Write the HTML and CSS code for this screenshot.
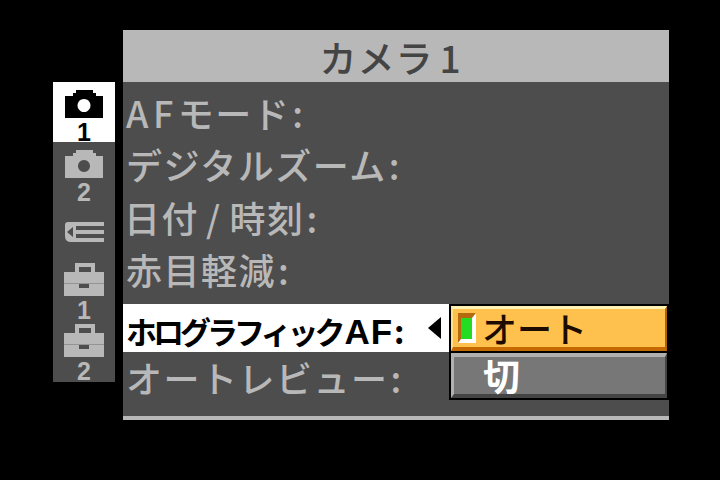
FILE: index.html
```html
<!DOCTYPE html>
<html lang="ja">
<head>
<meta charset="utf-8">
<title>カメラ1</title>
<link rel="stylesheet" href="styles.css">
</head>
<body>
<main class="screen">
  <nav class="tabs">
    <div class="tab tab-active tab-cam1">
      <svg class="icon icon-cam" viewBox="0 0 38 28"><path class="fill" fill-rule="evenodd" d="M0 6H8V3H11V0H28V3H31V6H38V28H0ZM19 9A6.500 6.500 0 1 0 19.010 9Z"/></svg>
      <span class="tab-num">1</span>
    </div>
    <div class="tab tab-cam2">
      <svg class="icon icon-cam" viewBox="0 0 38 28"><path class="fill" fill-rule="evenodd" d="M0 6H8V3H11V0H28V3H31V6H38V28H0ZM19 10A6 6 0 1 0 19.010 10Z"/></svg>
      <span class="tab-num">2</span>
    </div>
    <div class="tab tab-play">
      <svg class="icon icon-play" viewBox="0 0 39 20"><path class="fill" fill-rule="evenodd" d="M3 0H39V4H11V8H39V12H11V16H39V20H6Q0 20 0 14V3Q0 0 3 0ZM8 5L2 10L8 15Z"/></svg>
    </div>
    <div class="tab tab-case1">
      <svg class="icon icon-case" viewBox="0 0 40 33"><path class="fill" fill-rule="evenodd" d="M11 0H31V9H40V33H0V9H11ZM15 4V9H27V4ZM15 21V25H25V21Z"/><rect class="seam" x="0" y="20" width="40" height="1"/></svg>
      <span class="tab-num">1</span>
    </div>
    <div class="tab tab-case2">
      <svg class="icon icon-case" viewBox="0 0 40 33"><path class="fill" fill-rule="evenodd" d="M11 0H31V9H40V33H0V9H11ZM15 4V9H27V4ZM15 21V25H25V21Z"/><rect class="seam" x="0" y="20" width="40" height="1"/></svg>
      <span class="tab-num">2</span>
    </div>
  </nav>
  <section class="panel">
    <h1 class="title">カメラ<span class="title-num">1</span></h1>
    <ul class="rows">
      <li class="row"><span class="af">AF</span>モード<span class="colon">:</span></li>
      <li class="row">デジタルズーム<span class="colon">:</span></li>
      <li class="row row-date">日付<span class="slash">/</span>時刻<span class="colon">:</span></li>
      <li class="row">赤目軽減<span class="colon">:</span></li>
      <li class="row row-active"><span class="kana">ホログラフィック</span><span class="latin">AF</span><span class="colon">:</span><span class="arrow"></span></li>
      <li class="row">オートレビュー<span class="colon">:</span></li>
    </ul>
    <div class="strip"></div>
    <div class="popup">
      <div class="opt opt-on"><span class="marker"></span>オート</div>
      <div class="opt opt-off">切</div>
    </div>
  </section>
</main>
</body>
</html>
```

FILE: styles.css
```css
html, body {
  margin: 0;
  padding: 0;
  background: #000;
}
.screen {
  width: 720px;
  height: 480px;
  box-sizing: border-box;
  padding: 30px 51px 60px 53px;
  display: flex;
  align-items: flex-start;
  gap: 8px;
  background: #000;
  font-family: "Noto Sans CJK JP", "Liberation Sans", sans-serif;
  overflow: hidden;
}
.tabs {
  width: 62px;
  height: 300px;
  margin-top: 52px;
  flex: none;
  background: #4d4d4d;
  color: #b8b8b8;
}
.tab {
  display: flex;
  flex-direction: column;
  align-items: center;
  box-sizing: border-box;
}
.tab-active {
  background: #fff;
  color: #000;
}
.tab-cam1 { height: 60px; padding-top: 8px; }
.tab-cam2 { height: 62px; padding-top: 8px; }
.tab-play { height: 48px; padding-top: 18px; }
.tab-case1 { height: 68px; padding-top: 11px; }
.tab-case2 { height: 62px; padding-top: 4px; }
.icon { display: block; flex: none; }
.icon-cam { width: 38px; height: 28px; }
.icon-play { width: 39px; height: 20px; }
.icon-case { width: 40px; height: 33px; }
.fill { fill: currentColor; }
.seam { fill: #4d4d4d; opacity: 0.35; }
.tab-num {
  font: bold 25px/24px "Liberation Sans", sans-serif;
  height: 24px;
  margin-top: 2px;
}
.panel {
  position: relative;
  width: 546px;
  height: 390px;
  flex: none;
  background: #4d4d4d;
  display: flex;
  flex-direction: column;
}
.title {
  margin: 0;
  height: 52px;
  flex: none;
  box-sizing: border-box;
  padding-right: 11px;
  background: #b8b8b8;
  color: #444;
  font-size: 37px;
  font-weight: 500;
  line-height: 54px;
  text-align: center;
  letter-spacing: 1px;
}
.title-num { margin-left: 6px; }
.rows {
  list-style: none;
  margin: 0;
  padding: 8px 0 0;
  flex: 1;
}
.row {
  height: 52.4px;
  width: 326px;
  box-sizing: border-box;
  padding-left: 3px;
  color: #b8b8b8;
  font-size: 36px;
  font-weight: 500;
  line-height: 44px;
  letter-spacing: 1.5px;
  white-space: nowrap;
  position: relative;
}
.af { letter-spacing: 4.500px; }
.row-date { padding-left: 1px; }
.slash { margin: 0 8px 0 7px; }
.colon { margin-left: 2px; }
.row-active {
  background: #fff;
  color: #000;
  height: 48px;
  margin: 4.400px 0 3px;
  line-height: 48px;
  letter-spacing: 0;
}
.kana {
  font-size: 31px;
  font-weight: 700;
  letter-spacing: -4px;
}
.latin {
  font-family: "Liberation Sans", sans-serif;
  font-size: 35px;
  font-weight: 700;
  letter-spacing: 1px;
  margin-left: 3px;
}
.row-active .colon { font-size: 32px; font-weight: 700; margin-left: 1px; }
.arrow {
  position: absolute;
  right: 8px;
  top: 13px;
  width: 0;
  height: 0;
  border-style: solid;
  border-width: 11px 13px 11px 0;
  border-color: transparent #000 transparent transparent;
}
.strip {
  height: 4px;
  flex: none;
  background: #b8b8b8;
}
.popup {
  position: absolute;
  left: 326px;
  top: 274px;
  width: 220px;
  height: 96px;
  box-sizing: border-box;
  background: #000;
  padding: 2px;
  display: flex;
  flex-direction: column;
  gap: 2px;
}
.opt {
  flex: 1;
  box-sizing: border-box;
  display: flex;
  align-items: center;
  font-size: 35px;
  font-weight: 500;
  line-height: 1;
}
.opt-on {
  background: #ffc14d;
  color: #1c0c00;
  border-top: 3px solid #fff2b3;
  border-left: 2px solid #ffe08a;
  border-right: 2px solid #a8640f;
  border-bottom: 4px solid #c46a00;
  padding-left: 5px;
  gap: 6px;
}
.marker {
  width: 18px;
  height: 30px;
  flex: none;
  box-sizing: border-box;
  background: #22dd22;
  border-top: 5px solid #b56a10;
  border-left: 3px solid #b56a10;
  border-right: 4px solid #fff;
  border-bottom: 4px solid #fff;
}
.opt-off {
  background: #777;
  color: #fff;
  font-size: 37px;
  font-weight: 700;
  border-top: 4px solid #b0b0b0;
  border-left: 3px solid #b0b0b0;
  border-right: 2px solid #444;
  border-bottom: 4px solid #444;
  padding-left: 29px;
}
```
